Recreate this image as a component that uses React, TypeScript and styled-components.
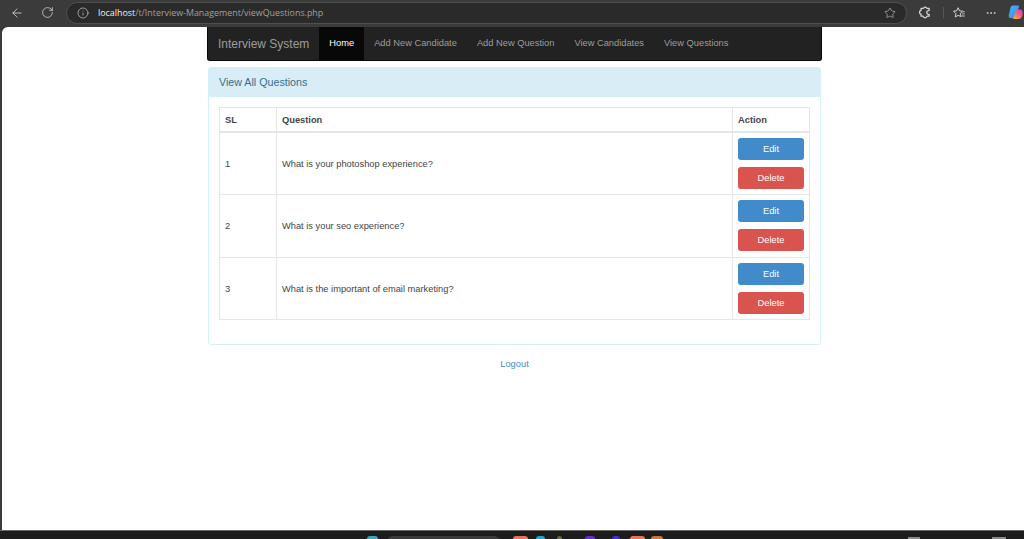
import React from 'react';
import styled, { createGlobalStyle } from 'styled-components';
import { ArrowLeft, RotateCw, Info, Star, Ellipsis } from 'lucide-react';

const GlobalStyle = createGlobalStyle`
  html, body, #root {
    margin: 0;
    padding: 0;
    height: 100%;
    overflow: hidden;
  }
  body {
    font-family: "Liberation Sans", Arial, sans-serif;
    background: #3b3b3b;
  }
`;

const Screen = styled.div`
  display: flex;
  flex-direction: column;
  height: 539px;
  width: 1024px;
  background: #3b3b3b;
  overflow: hidden;
`;

const Toolbar = styled.header`
  display: flex;
  align-items: center;
  height: 27px;
  flex: none;
  padding: 0 0 2px 0;
  box-sizing: border-box;
  color: #d6d6d6;
`;

const ToolButton = styled.div<{ $w: number }>`
  display: flex;
  align-items: center;
  justify-content: center;
  width: ${p => p.$w}px;
  flex: none;
  color: #d8d8d8;
`;

const AddressBar = styled.div`
  display: flex;
  align-items: center;
  flex: none;
  width: 841px;
  height: 22px;
  box-sizing: border-box;
  padding: 0 10px 0 10px;
  background: #2a2a2a;
  border: 1px solid #4f4f4f;
  border-radius: 11px;
  font-family: "Open Sans", "Noto Sans", sans-serif;
  font-size: 8.9px;
  color: #a0a0a0;
`;

const Url = styled.span`
  flex: 1;
  margin-left: 9px;
  white-space: nowrap;
  b {
    font-weight: 400;
    color: #f2f2f2;
  }
`;

const Divider = styled.span`
  width: 1px;
  height: 11px;
  background: #555;
  flex: none;
`;

const Viewport = styled.div`
  flex: 1;
  min-height: 0;
  margin-left: 2px;
  background: #fff;
  border-top-left-radius: 6px;
  display: flex;
  flex-direction: column;
  align-items: center;
`;

const Container = styled.div`
  width: 615px;
  margin-left: 3px;
`;

const Navbar = styled.nav`
  display: flex;
  align-items: stretch;
  height: 34px;
  background: #222;
  border: 1px solid #080808;
  border-top: 0;
  border-radius: 0 0 3px 3px;
  box-sizing: border-box;
  padding-left: 10px;
`;

const Brand = styled.span`
  align-self: center;
  font-size: 12px;
  color: #9d9d9d;
  margin-right: 10px;
  white-space: nowrap;
`;

const NavLink = styled.a<{ $active?: boolean }>`
  display: flex;
  align-items: center;
  padding: 0 10px 1px;
  font-size: 9.3px;
  white-space: nowrap;
  color: ${p => (p.$active ? '#fff' : '#9d9d9d')};
  background: ${p => (p.$active ? '#080808' : 'transparent')};
`;

const Panel = styled.section`
  margin: 6px 1px 0;
  border: 1px solid #d3f0f6;
  border-radius: 3px;
  background: #fff;
`;

const PanelHeading = styled.h3`
  margin: 0;
  height: 29px;
  box-sizing: border-box;
  padding-left: 10px;
  display: flex;
  align-items: center;
  font-size: 10.7px;
  font-weight: 400;
  color: #31708f;
  background: #d9edf7;
  border-bottom: 1px solid #d3f0f6;
`;

const PanelBody = styled.div`
  padding: 10px 10px 24px;
`;

const Table = styled.table`
  width: 591px;
  border-collapse: collapse;
  table-layout: fixed;
  font-size: 9.3px;
  color: #444;
`;

const Th = styled.th<{ $w?: number }>`
  width: ${p => (p.$w ? `${p.$w}px` : 'auto')};
  height: 24px;
  box-sizing: border-box;
  padding: 1px 5px 0;
  text-align: left;
  font-weight: 700;
  border: 1px solid #e6e6e6;
  border-bottom-width: 2px;
`;

const Td = styled.td`
  padding: 6px 5px 5px;
  border: 1px solid #e6e6e6;
  vertical-align: middle;
`;

const ActionCell = styled(Td)`
  padding: 5px;
`;

const ActionStack = styled.div`
  display: flex;
  flex-direction: column;
  gap: 7px;
  padding-bottom: 0.6px;
`;

const Button = styled.a<{ $bg: string }>`
  display: flex;
  align-items: center;
  justify-content: center;
  height: 22px;
  background: ${p => p.$bg};
  border-radius: 3px;
  color: #fff;
  font-size: 9.3px;
`;

const Footer = styled.div`
  margin-top: 14px;
  text-align: center;
  font-size: 9.3px;
  color: #428bca;
`;

const Taskbar = styled.footer`
  height: 9px;
  flex: none;
  background: #1d1d1d;
  border-top: 1px solid #6a6a6a;
  box-sizing: border-box;
  display: flex;
  align-items: flex-start;
  padding: 5px 0 0 367px;
  overflow: hidden;
`;

const TrayIcon = styled.span<{ $color: string; $w?: number; $gap?: number }>`
  width: ${p => p.$w ?? 11}px;
  height: 12px;
  flex: none;
  margin-right: ${p => p.$gap ?? 0}px;
  background: ${p => p.$color};
  border-radius: 3px 3px 0 0;
`;

const SearchPill = styled.span`
  width: 113px;
  height: 12px;
  flex: none;
  margin-right: 13px;
  background: #3a3a3a;
  border-radius: 7px;
`;

const TrayText = styled.span<{ $gap: number; $w: number }>`
  width: ${p => p.$w}px;
  height: 2px;
  flex: none;
  margin-left: ${p => p.$gap}px;
  margin-top: 1px;
  background: #8a8a8a;
`;

const ExtensionIcon = () => (
  <svg width="13" height="13" viewBox="0 0 16 16" fill="none" stroke="#d8d8d8" strokeWidth="1.5" strokeLinejoin="round">
    <path d="M6 2.2c.6-1.2 2.6-1.2 3.2 0 .2.5.5.8 1 .8h2.3v2.6c-1.6-.2-3 .6-3 2.3s1.400 2.500 3 2.300v2.300h-2.500c-.3 1.300-1.300 2-2.500 2-1.300 0-2.300-.7-2.600-2H2.500v-2.400c-1.500-.4-1.900-1.400-1.900-2.300s.6-2 1.900-2.300V3h2.500c.5 0 .8-.3 1-.8z" />
  </svg>
);

const CopilotIcon = () => (
  <svg width="17" height="17" viewBox="0 0 16 16">
    <defs>
      <linearGradient id="cpA" x1="0" y1="0" x2="1" y2="1">
        <stop offset="0" stopColor="#35c1f1" />
        <stop offset="1" stopColor="#4a7cf0" />
      </linearGradient>
      <linearGradient id="cpB" x1="0" y1="1" x2="1" y2="0">
        <stop offset="0" stopColor="#f7c31c" />
        <stop offset="0.6" stopColor="#f0568a" />
        <stop offset="1" stopColor="#b34fd8" />
      </linearGradient>
    </defs>
    <path d="M5 1h5c.8 0 1.200.5 1 1.200L7.400 12.500c-.3.8-.8 1.200-1.600 1.200H3C1.200 13.700.4 12.400.8 10.800L2.600 3.100C2.900 1.700 3.800 1 5 1z" fill="url(#cpA)" />
    <path d="M8.500 5h3.800c1.100 0 1.700.6 2 1.400.5 1.600.5 3.400-.1 5-.5 1.800-1.700 3.100-3.400 3.100H6.200c-.8 0-1.100-.5-.8-1.200z" fill="url(#cpB)" />
  </svg>
);

const FavoritesIcon = () => (
  <svg width="14" height="14" viewBox="0 0 16 16" fill="none" stroke="#d8d8d8" strokeWidth="1.1">
    <path d="M7 2l1.600 3.500 3.600.4-2.700 2.500.8 3.700L7 10.700l-3.300 1.900.8-3.700L1.800 5.900l3.600-.4z" />
    <path d="M11 6.500h3.500M11.500 9h3M11 11.500h3.500" strokeWidth="1.6" stroke="#9a9a9a" />
  </svg>
);

const questions = [
  'What is your photoshop experience?',
  'What is your seo experience?',
  'What is the important of email marketing?',
];

const navItems = ['Home', 'Add New Candidate', 'Add New Question', 'View Candidates', 'View Questions'];

export default function App() {
  return (
    <>
      <GlobalStyle />
      <Screen>
        <Toolbar>
          <ToolButton $w={34}><ArrowLeft size={14} strokeWidth={1.4} /></ToolButton>
          <ToolButton $w={26}><RotateCw size={13} strokeWidth={1.4} /></ToolButton>
          <ToolButton $w={6} />
          <AddressBar>
            <Info size={12} strokeWidth={1.3} color="#d8d8d8" />
            <Url><b>localhost</b>/t/Interview-Management/viewQuestions.php</Url>
            <Star size={12} strokeWidth={1.2} color="#cfcfcf" />
          </AddressBar>
          <ToolButton $w={36}><ExtensionIcon /></ToolButton>
          <Divider />
          <ToolButton $w={29}><FavoritesIcon /></ToolButton>
          <ToolButton $w={35}><Ellipsis size={12} strokeWidth={1.6} /></ToolButton>
          <CopilotIcon />
        </Toolbar>

        <Viewport>
          <Container>
            <Navbar>
              <Brand>Interview System</Brand>
              {navItems.map((item, i) => (
                <NavLink key={item} $active={i === 0}>{item}</NavLink>
              ))}
            </Navbar>

            <Panel>
              <PanelHeading>View All Questions</PanelHeading>
              <PanelBody>
                <Table>
                  <thead>
                    <tr>
                      <Th $w={57}>SL</Th>
                      <Th>Question</Th>
                      <Th $w={77}>Action</Th>
                    </tr>
                  </thead>
                  <tbody>
                    {questions.map((q, i) => (
                      <tr key={q}>
                        <Td>{i + 1}</Td>
                        <Td>{q}</Td>
                        <ActionCell>
                          <ActionStack>
                            <Button $bg="#428bca">Edit</Button>
                            <Button $bg="#d9534f">Delete</Button>
                          </ActionStack>
                        </ActionCell>
                      </tr>
                    ))}
                  </tbody>
                </Table>
              </PanelBody>
            </Panel>

            <Footer>Logout</Footer>
          </Container>
        </Viewport>

        <Taskbar>
          <TrayIcon $color="#3aa6b9" $gap={9} />
          <SearchPill />
          <TrayIcon $color="#e8735a" $w={15} $gap={8} />
          <TrayIcon $color="#1fa6c9" $w={9} $gap={12} />
          <TrayIcon $color="#6b6b3a" $w={5} $gap={23} />
          <TrayIcon $color="#6a2bd0" $w={10} $gap={17} />
          <TrayIcon $color="#4a2bd0" $w={8} $gap={10} />
          <TrayIcon $color="#e8735a" $w={15} $gap={6} />
          <TrayIcon $color="#c9793a" $w={12} />
          <TrayText $gap={245} $w={12} />
          <TrayText $gap={72} $w={14} />
        </Taskbar>
      </Screen>
    </>
  );
}
